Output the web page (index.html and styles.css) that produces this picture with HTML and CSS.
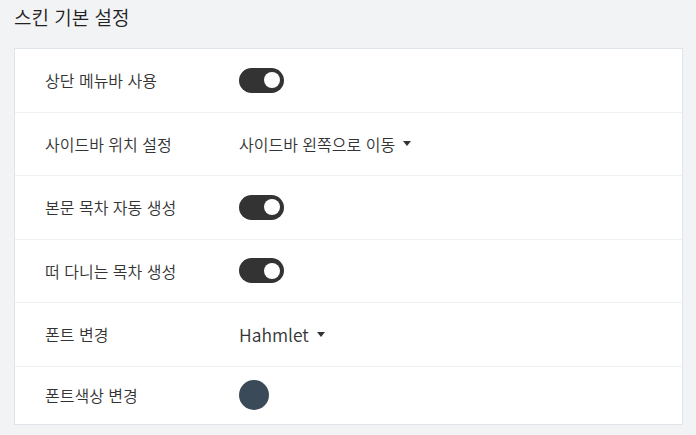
FILE: index.html
```html
<!DOCTYPE html>
<html lang="ko">
<head>
<meta charset="utf-8">
<link rel="stylesheet" href="styles.css">
</head>
<body>
<div class="page">
  <h2 class="title">스킨 기본 설정</h2>
  <div class="card">
    <div class="row"><div class="label">상단 메뉴바 사용</div><div class="value"><span class="toggle"><span class="knob"></span></span></div></div>
    <div class="row"><div class="label">사이드바 위치 설정</div><div class="value"><span class="select">사이드바 왼쪽으로 이동<span class="caret"></span></span></div></div>
    <div class="row"><div class="label">본문 목차 자동 생성</div><div class="value"><span class="toggle"><span class="knob"></span></span></div></div>
    <div class="row"><div class="label">떠 다니는 목차 생성</div><div class="value"><span class="toggle"><span class="knob"></span></span></div></div>
    <div class="row"><div class="label">폰트 변경</div><div class="value"><span class="select latin">Hahmlet<span class="caret"></span></span></div></div>
    <div class="row last"><div class="label">폰트색상 변경</div><div class="value"><span class="swatch"></span></div></div>
  </div>
</div>
</body>
</html>
```
FILE: styles.css
```css
* { box-sizing: border-box; }
html, body { margin: 0; padding: 0; background: #f2f3f5; }
body {
  font-family: "Noto Sans CJK KR", "Noto Sans", sans-serif;
  font-weight: 350;
  color: #333;
  width: 696px;
  height: 435px;
  overflow: hidden;
}
.page { padding: 3px 14px 0 14px; }
.title {
  margin: 0;
  font-size: 19px;
  font-weight: 350;
  line-height: 28px;
  color: #222;
  height: 45px;
}
.card {
  width: 669px;
  background: #fff;
  border: 1px solid #dfe3ea;
}
.row {
  display: flex;
  align-items: center;
  height: 63.5px;
  border-top: 1px solid #eef0f3;
  padding-left: 30px;
}
.row:first-child { border-top: none; height: 62.5px; }
.row.last { height: 58px; }
.label {
  width: 194px;
  font-size: 16px;
  color: #333;
}
.value { display: flex; align-items: center; font-size: 16px; }
.toggle {
  width: 45px;
  height: 25px;
  border-radius: 13px;
  background: #333;
  display: flex;
  align-items: center;
  justify-content: flex-end;
  padding-right: 4px;
}
.knob {
  width: 16px;
  height: 16px;
  border-radius: 50%;
  background: #fff;
}
.select {
  display: inline-flex;
  align-items: center;
  font-size: 16px;
  color: #333;
}
.select.latin { font-size: 17.5px; }
.caret {
  margin-left: 8px;
  width: 0;
  height: 0;
  border-left: 4.5px solid transparent;
  border-right: 4.5px solid transparent;
  border-top: 5px solid #333;
}
.swatch {
  width: 30px;
  height: 30px;
  border-radius: 50%;
  background: #3b4a58;
}
```
